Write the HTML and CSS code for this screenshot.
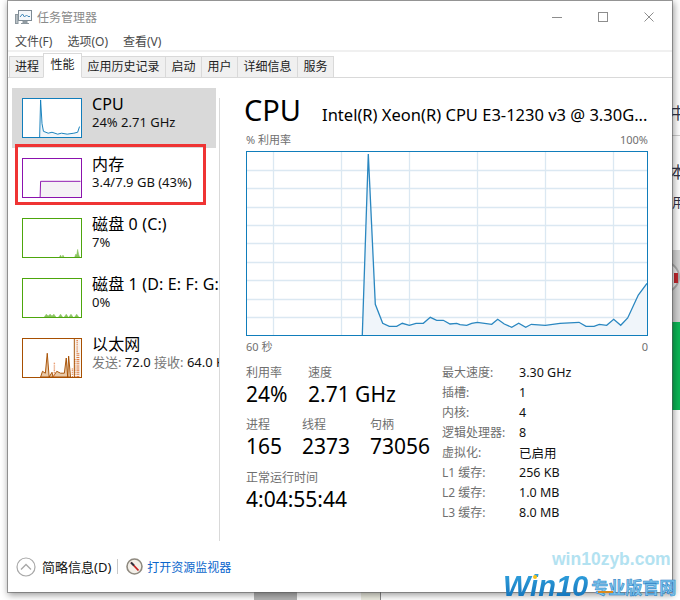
FILE: index.html
```html
<!DOCTYPE html>
<html lang="zh-CN">
<head>
<meta charset="utf-8">
<title>任务管理器</title>
<link rel="stylesheet" href="styles.css">
</head>
<body>
<div class="backdrop">
  <span class="bg-glyph bg-g1">中</span>
  <span class="bg-glyph bg-g2">本</span>
  <span class="bg-glyph bg-g3">用,</span>
  <div class="bg-rule"></div>
  <div class="bg-pattern"><div class="bg-dial"></div></div>
  <div class="bg-green"></div>
  <div class="bg-block"></div>
  <div class="bg-pale"></div>
</div>

<div class="window">
  <header class="titlebar">
    <svg class="app-icon" width="18" height="17" viewBox="0 0 18 17">
      <rect x="3.5" y="1.5" width="13" height="10" fill="#f4f8fb" stroke="#7d8a94"/>
      <path d="M5 8l2.5-3 2 3 2-2 1.500 1.500H15" fill="none" stroke="#3f87b8"/>
      <rect x="0.500" y="5.500" width="2.500" height="9" fill="#b9c1c6" stroke="#8c979e" stroke-width="1"/>
      <path d="M8 12h4v2H8zM6 14.500h8" fill="#9aa3a9" stroke="#8c979e"/>
    </svg>
    <span class="title-text">任务管理器</span>
    <div class="controls">
      <div class="ctl"><svg width="10" height="10" viewBox="0 0 10 10"><path d="M0 5.500h10" stroke="#8d8d8d"/></svg></div>
      <div class="ctl"><svg width="10" height="10" viewBox="0 0 10 10"><rect x=".5" y=".5" width="9" height="9" fill="none" stroke="#8d8d8d"/></svg></div>
      <div class="ctl"><svg width="10" height="10" viewBox="0 0 10 10"><path d="M.5.500l9 9M9.500.500l-9 9" stroke="#8d8d8d"/></svg></div>
    </div>
  </header>

  <nav class="menubar">
    <span class="menu-item">文件(F)</span>
    <span class="menu-item">选项(O)</span>
    <span class="menu-item">查看(V)</span>
  </nav>

  <div class="tabs">
    <span class="tab tab-first">进程</span>
    <span class="tab tab-active">性能</span>
    <span class="tab">应用历史记录</span>
    <span class="tab">启动</span>
    <span class="tab">用户</span>
    <span class="tab">详细信息</span>
    <span class="tab">服务</span>
  </div>

  <div class="content">
    <aside class="sidebar">
      <div class="res res-selected">
        <svg class="thumb thumb-cpu" width="60" height="40" viewBox="0 0 60 40">
          <path d="M17 40L18 1L19.500 26L21 34L26 36L30 35L36 37L40 36L46 37L53 36L57 35L59 29V40Z" fill="#f1f6fa"/>
          <path d="M17 40L18 1L19.500 26L21 34L26 36L30 35L36 37L40 36L46 37L53 36L57 35L59 29" fill="none" stroke="#117dbb"/>
        </svg>
        <div class="res-text">
          <div class="res-name">CPU</div>
          <div class="res-sub">24% 2.71 GHz</div>
        </div>
      </div>
      <div class="res res-mem">
        <svg class="thumb thumb-mem" width="60" height="40" viewBox="0 0 60 40">
          <path d="M17.500 40V23.500H60V40Z" fill="#f4f2f5"/>
          <path d="M17.500 40L18 23.500H60" fill="none" stroke="#8b12ae"/>
        </svg>
        <div class="res-text">
          <div class="res-name">内存</div>
          <div class="res-sub">3.4/7.9 GB (43%)</div>
        </div>
        <div class="callout"></div>
      </div>
      <div class="res">
        <svg class="thumb thumb-disk" width="60" height="40" viewBox="0 0 60 40">
          <path d="M38 40l1-2 1 2zM41 40l.5-2 1 2zM54 40l1-3 1 1 1-6 1 5 1 3z" fill="#8cc665" stroke="#7dbb4d" stroke-width=".5"/>
        </svg>
        <div class="res-text">
          <div class="res-name">磁盘 0 (C:)</div>
          <div class="res-sub">7%</div>
        </div>
      </div>
      <div class="res">
        <svg class="thumb thumb-disk" width="60" height="40" viewBox="0 0 60 40">
          <path d="M22 40l2-3 2 2 2-2 2 2 2-2 2 3zM37 40l2-3 2 3zM43 40l2-3 2 3zM48 40l2-3 2 3zM54 40l2-3 2 3z" fill="#8cc665" stroke="#7dbb4d" stroke-width=".5"/>
        </svg>
        <div class="res-text">
          <div class="res-name">磁盘 1 (D: E: F: G:)</div>
          <div class="res-sub">0%</div>
        </div>
      </div>
      <div class="res">
        <svg class="thumb thumb-net" width="60" height="40" viewBox="0 0 60 40">
          <path d="M18 40L20 34L23 36L25 15L27 40L30 35L31 40L35 34L39 36L43 36L45 20L46.500 40L47.500 18L49.500 40Z" fill="#e8c9a8" stroke="#a74f01"/>
          <path d="M32.500 40V25M51.500 40V30M54 40V20M56.500 40V1M58 40V14" fill="none" stroke="#e2804a" stroke-width="1.500" stroke-dasharray="1 1"/>
          <path d="M53.500 0V40" stroke="#a74f01"/>
          <path d="M54 0H60V40H54Z" fill="#a74f01" fill-opacity=".08"/>
        </svg>
        <div class="res-text">
          <div class="res-name">以太网</div>
          <div class="res-sub"><span class="muted">发送:</span> 72.0 <span class="muted">接收:</span> 64.0 Kbps</div>
        </div>
      </div>
    </aside>
    <div class="divider"></div>

    <main class="panel">
      <div class="head">
        <h1 class="head-title">CPU</h1>
        <span class="head-model">Intel(R) Xeon(R) CPU E3-1230 v3 @ 3.30G...</span>
      </div>
      <div class="axis axis-top"><span>% 利用率</span><span>100%</span></div>
      <svg class="chart" width="402" height="185" viewBox="246 151 402 185">
        <g class="grid">
          <path d="M273.500 152V335M341.500 152V335M409.500 152V335M477.500 152V335M545.500 152V335M613.500 152V335"/>
          <path d="M247 170.500H647M247 188.500H647M247 207.500H647M247 225.500H647M247 243.500H647M247 262.500H647M247 280.500H647M247 299.500H647M247 317.500H647"/>
        </g>
        <path class="area" d="M362.300 335L368.300 154L375.300 304.300L382.700 323.300L389.300 326.300L396.700 326.300L402.300 323.300L409.300 325.300L416 323.300L423.300 323.300L430.300 317.300L436.700 320.300L443.300 320.300L450 324L456.700 323.300L460 324.700L466.700 325.300L471.700 323.300L477.300 322.300L491.700 324.300L497.700 319.300L504.300 324L511.700 327.300L518.700 323.300L525.700 327.300L531.300 324.300L545.300 325.300L560 323.300L579 322.300L586 326.300L594 326.300L599.300 324.300L606.700 325.300L613.700 319.300L620.700 325.300L627.700 318L638.300 295L647 283.300V335Z"/>
        <path class="line" d="M362.300 335L368.300 154L375.300 304.300L382.700 323.300L389.300 326.300L396.700 326.300L402.300 323.300L409.300 325.300L416 323.300L423.300 323.300L430.300 317.300L436.700 320.300L443.300 320.300L450 324L456.700 323.300L460 324.700L466.700 325.300L471.700 323.300L477.300 322.300L491.700 324.300L497.700 319.300L504.300 324L511.700 327.300L518.700 323.300L525.700 327.300L531.300 324.300L545.300 325.300L560 323.300L579 322.300L586 326.300L594 326.300L599.300 324.300L606.700 325.300L613.700 319.300L620.700 325.300L627.700 318L638.300 295L647 283.300"/>
        <rect class="frame" x="246.500" y="151.500" width="401" height="184"/>
      </svg>
      <div class="axis axis-bottom"><span>60 秒</span><span>0</span></div>

      <div class="stats">
        <div class="stats-left">
          <div class="stat-row stat-row-a">
            <div class="stat"><div class="stat-label">利用率</div><div class="stat-value">24%</div></div>
            <div class="stat"><div class="stat-label">速度</div><div class="stat-value">2.71 GHz</div></div>
          </div>
          <div class="stat-row stat-row-b">
            <div class="stat"><div class="stat-label">进程</div><div class="stat-value">165</div></div>
            <div class="stat"><div class="stat-label">线程</div><div class="stat-value">2373</div></div>
            <div class="stat"><div class="stat-label">句柄</div><div class="stat-value">73056</div></div>
          </div>
          <div class="stat-row">
            <div class="stat"><div class="stat-label">正常运行时间</div><div class="stat-value">4:04:55:44</div></div>
          </div>
        </div>
        <dl class="specs">
          <dt>最大速度:</dt><dd>3.30 GHz</dd>
          <dt>插槽:</dt><dd>1</dd>
          <dt>内核:</dt><dd>4</dd>
          <dt>逻辑处理器:</dt><dd>8</dd>
          <dt>虚拟化:</dt><dd>已启用</dd>
          <dt>L1 缓存:</dt><dd>256 KB</dd>
          <dt>L2 缓存:</dt><dd>1.0 MB</dd>
          <dt>L3 缓存:</dt><dd>8.0 MB</dd>
        </dl>
      </div>
    </main>
  </div>

  <footer class="footer">
    <svg class="foot-chevron" width="20" height="20" viewBox="0 0 20 20">
      <circle cx="10" cy="10" r="9" fill="none" stroke="#a8a8a8" stroke-width="1.200"/>
      <path d="M5 12.500l5-5 5 5" fill="none" stroke="#a8a8a8" stroke-width="1.300"/>
    </svg>
    <span class="foot-label">简略信息(D)</span>
    <span class="foot-sep"></span>
    <svg class="foot-gauge" width="17" height="17" viewBox="0 0 17 17">
      <circle cx="8.500" cy="8.500" r="7.500" fill="#f3efe8" stroke="#8f8a80" stroke-width="1.600"/>
      <path d="M5 4.500l7.500 8" stroke="#c21f1f" stroke-width="1.800"/>
      <path d="M5 4.500l3 3" stroke="#2b3440" stroke-width="1.800"/>
    </svg>
    <a class="foot-link">打开资源监视器</a>
  </footer>
</div>

<div class="watermark">
  <div class="wm-site">win10zyb.com</div>
  <div class="wm-brand"><span class="wm-win">Win10</span><span class="wm-cn">专业版官网</span></div>
  <span class="wm-dot"></span>
  <span class="wm-under"></span>
</div>
</body>
</html>
```

FILE: styles.css
```css
* { box-sizing: border-box; }
html, body { margin: 0; padding: 0; }
body {
  width: 680px;
  height: 600px;
  overflow: hidden;
  position: relative;
  background: #fff;
  font-family: "Noto Sans", "Noto Sans CJK SC", sans-serif;
  color: #000;
}

/* Desktop visible behind the window */
.backdrop { position: absolute; inset: 0; overflow: hidden; background: #fff; }
.bg-glyph { position: absolute; left: 670px; font-size: 16px; line-height: 20px; color: #334; white-space: nowrap; }
.bg-g1 { top: 103px; }
.bg-g2 { top: 162px; }
.bg-g3 { top: 192px; left: 672px; font-size: 13px; }
.bg-rule { position: absolute; left: 672px; top: 135px; width: 8px; height: 1px; background: #ccc; }
.bg-pattern { position: absolute; left: 672px; top: 250px; width: 8px; height: 72px; background: #d4d4d4; overflow: hidden; }
.bg-dial { position: absolute; left: -24px; top: 11px; width: 32px; height: 32px; border-radius: 50%; background: #e8e8e8; border: 2px solid #aaa; box-shadow: inset 0 0 0 12px #ececec; }
.bg-dial::after { content: ""; position: absolute; right: 0; top: 10px; width: 4px; height: 10px; background: #c0272d; }
.bg-green { position: absolute; left: 672px; top: 322px; width: 8px; height: 88px; background: #0bb655; }
.bg-block { position: absolute; left: 254px; top: 592px; width: 43px; height: 8px; background: #b4b4b4; }
.bg-pale { position: absolute; left: 361px; top: 592px; width: 20px; height: 8px; background: #ecece0; border-right: 1px solid #888; }

/* Window */
.window {
  position: relative;
  width: 664px;
  height: 591px;
  margin: 1px 0 0 8px;
  display: flex;
  flex-direction: column;
  background: #fff;
  box-shadow: 0 0 0 1px rgba(90, 90, 90, .55), 1px 2px 7px 1px rgba(0, 0, 0, .4);
}
.titlebar { height: 32px; display: flex; align-items: center; padding-left: 7px; }
.app-icon { margin-right: 4px; }
.title-text { font-size: 12px; color: #8a8a8a; letter-spacing: 0; }
.controls { margin-left: auto; display: flex; }
.ctl { width: 46px; height: 32px; display: flex; align-items: center; justify-content: center; }

.menubar { height: 17px; display: flex; padding-left: 7px; gap: 15px; align-items: center; }
.menu-item { font-size: 12px; line-height: 16px; color: #4a4a4a; }

.tabs {
  height: 28px;
  border-top: 2px solid #f0f0f0;
  border-bottom: 1px solid #d9d9d9;
  display: flex;
  align-items: flex-end;
  padding-left: 2px;
}
.tab {
  height: 22px;
  margin-bottom: -1px;
  margin-left: -1px;
  padding: 0 5.500px;
  font-size: 12px;
  line-height: 20px;
  color: #222;
  background: #f0f0f0;
  border: 1px solid #d9d9d9;
}
.tab-first { padding: 0 4px 0 5px; }
.tab-active {
  position: relative;
  height: 25px;
  padding: 0 6.500px;
  background: #fff;
  border-bottom-color: #fff;
  line-height: 21px;
}

.content { flex: 1; display: flex; min-height: 0; }
.sidebar { width: 207px; margin-left: 4px; padding-top: 10px; overflow: hidden; flex: none; }
.res { position: relative; width: 204px; height: 60px; padding: 10px; display: flex; gap: 10px; white-space: nowrap; }
.res-selected { background: #d9d9d9; }
.thumb { flex: none; display: block; width: 60px; height: 40px; background: #fff; border: 1px solid; overflow: hidden; }
.thumb-cpu { border-color: #117dbb; }
.thumb-mem { border-color: #8b12ae; }
.thumb-disk { border-color: #4da60c; }
.thumb-net { border-color: #a74f01; }
.res-text { margin-top: -5px; }
.res-name { font-size: 16px; line-height: 22px; letter-spacing: .15px; }
.res-sub { font-size: 13px; line-height: 16px; color: #111; margin-top: -1px; }
.muted { color: #777; }
.callout { position: absolute; left: 3px; top: -4px; width: 191px; height: 61px; border: 3px solid #ef3434; }

.divider { width: 1px; flex: none; background: #d9d9d9; margin-top: 20px; }

.panel { flex: 1; min-width: 0; padding: 14px 0 0 26px; }
.head { display: flex; align-items: baseline; height: 36px; }
.head-title { margin: 0 0 0 -2px; font-size: 29px; line-height: 36px; font-weight: 400; }
.head-model { margin-left: 21px; font-size: 16.500px; line-height: 36px; white-space: nowrap; }
.axis { width: 402px; display: flex; justify-content: space-between; font-size: 11px; color: #707070; }
.axis-top { line-height: 16px; margin-top: 4px; height: 19px; }
.axis-bottom { line-height: 16px; margin-top: 3px; }
.chart { display: block; }
.grid path { fill: none; stroke: #dbe8f2; stroke-width: 1.300; }
.area { fill: #f0f5fa; }
.line { fill: none; stroke: #2a87c0; stroke-width: 1.300; }
.frame { fill: none; stroke: #117dbb; stroke-width: 1; }

.stats { display: flex; margin-top: 10px; }
.stats-left { width: 196px; flex: none; }
.stat-row { display: flex; margin-bottom: 9px; }
.stat-row-a .stat:first-child { width: 62px; }
.stat-row-b { margin-bottom: 10px; }
.stat-row-b .stat:first-child { width: 56px; }
.stat-row-b .stat:nth-child(2) { width: 68px; }
.stat-label { font-size: 12px; line-height: 16px; color: #6f6f6f; }
.stat-value { font-size: 21px; line-height: 28px; white-space: nowrap; margin-top: -1px; }

.specs { margin: -3px 0 0; display: grid; grid-template-columns: 77px 1fr; grid-auto-rows: 20px; align-items: center; font-size: 12.500px; }
.specs dt { color: #6f6f6f; font-size: 12px; }
.specs dd { margin: 0; color: #111; }

.footer { height: 51px; display: flex; align-items: center; padding-left: 8px; flex: none; }
.foot-label { margin-left: 6px; font-size: 13px; color: #111; }
.foot-sep { width: 1px; height: 15px; background: #c8c8c8; margin: 0 8px 0 6px; }
.foot-gauge { flex: none; }
.foot-link { margin-left: 4px; font-size: 12px; color: #0a66cc; }

/* Watermark laid over the window */
.watermark { position: absolute; left: 0; top: 0; width: 680px; height: 600px; overflow: hidden; pointer-events: none; }
.wm-site { position: absolute; left: 552px; top: 549px; font-family: "Liberation Sans", sans-serif; font-weight: 700; font-size: 17.500px; line-height: 20px; color: #b3e2f1; white-space: nowrap; }
.wm-brand { position: absolute; left: 503px; top: 570px; display: flex; align-items: center; white-space: nowrap; }
.wm-win {
  font-family: "Liberation Sans", sans-serif;
  font-weight: 700;
  font-style: italic;
  font-size: 29px;
  line-height: 32px;
  background: linear-gradient(180deg, #35a7e2, #0e6cb5);
  -webkit-background-clip: text;
  background-clip: text;
  color: transparent;
}
.wm-cn { margin: 3px 0 0 3px; font-weight: 700; font-size: 17px; line-height: 20px; color: #7cc3ea; -webkit-text-stroke: .5px #1f7cc4; }
.wm-dot { position: absolute; left: 533px; top: 575px; width: 4px; height: 4px; background: #f6c21a; border-radius: 50%; }
.wm-under { position: absolute; left: 598px; top: 591px; width: 15px; height: 2px; background: #d98a1e; }
```
